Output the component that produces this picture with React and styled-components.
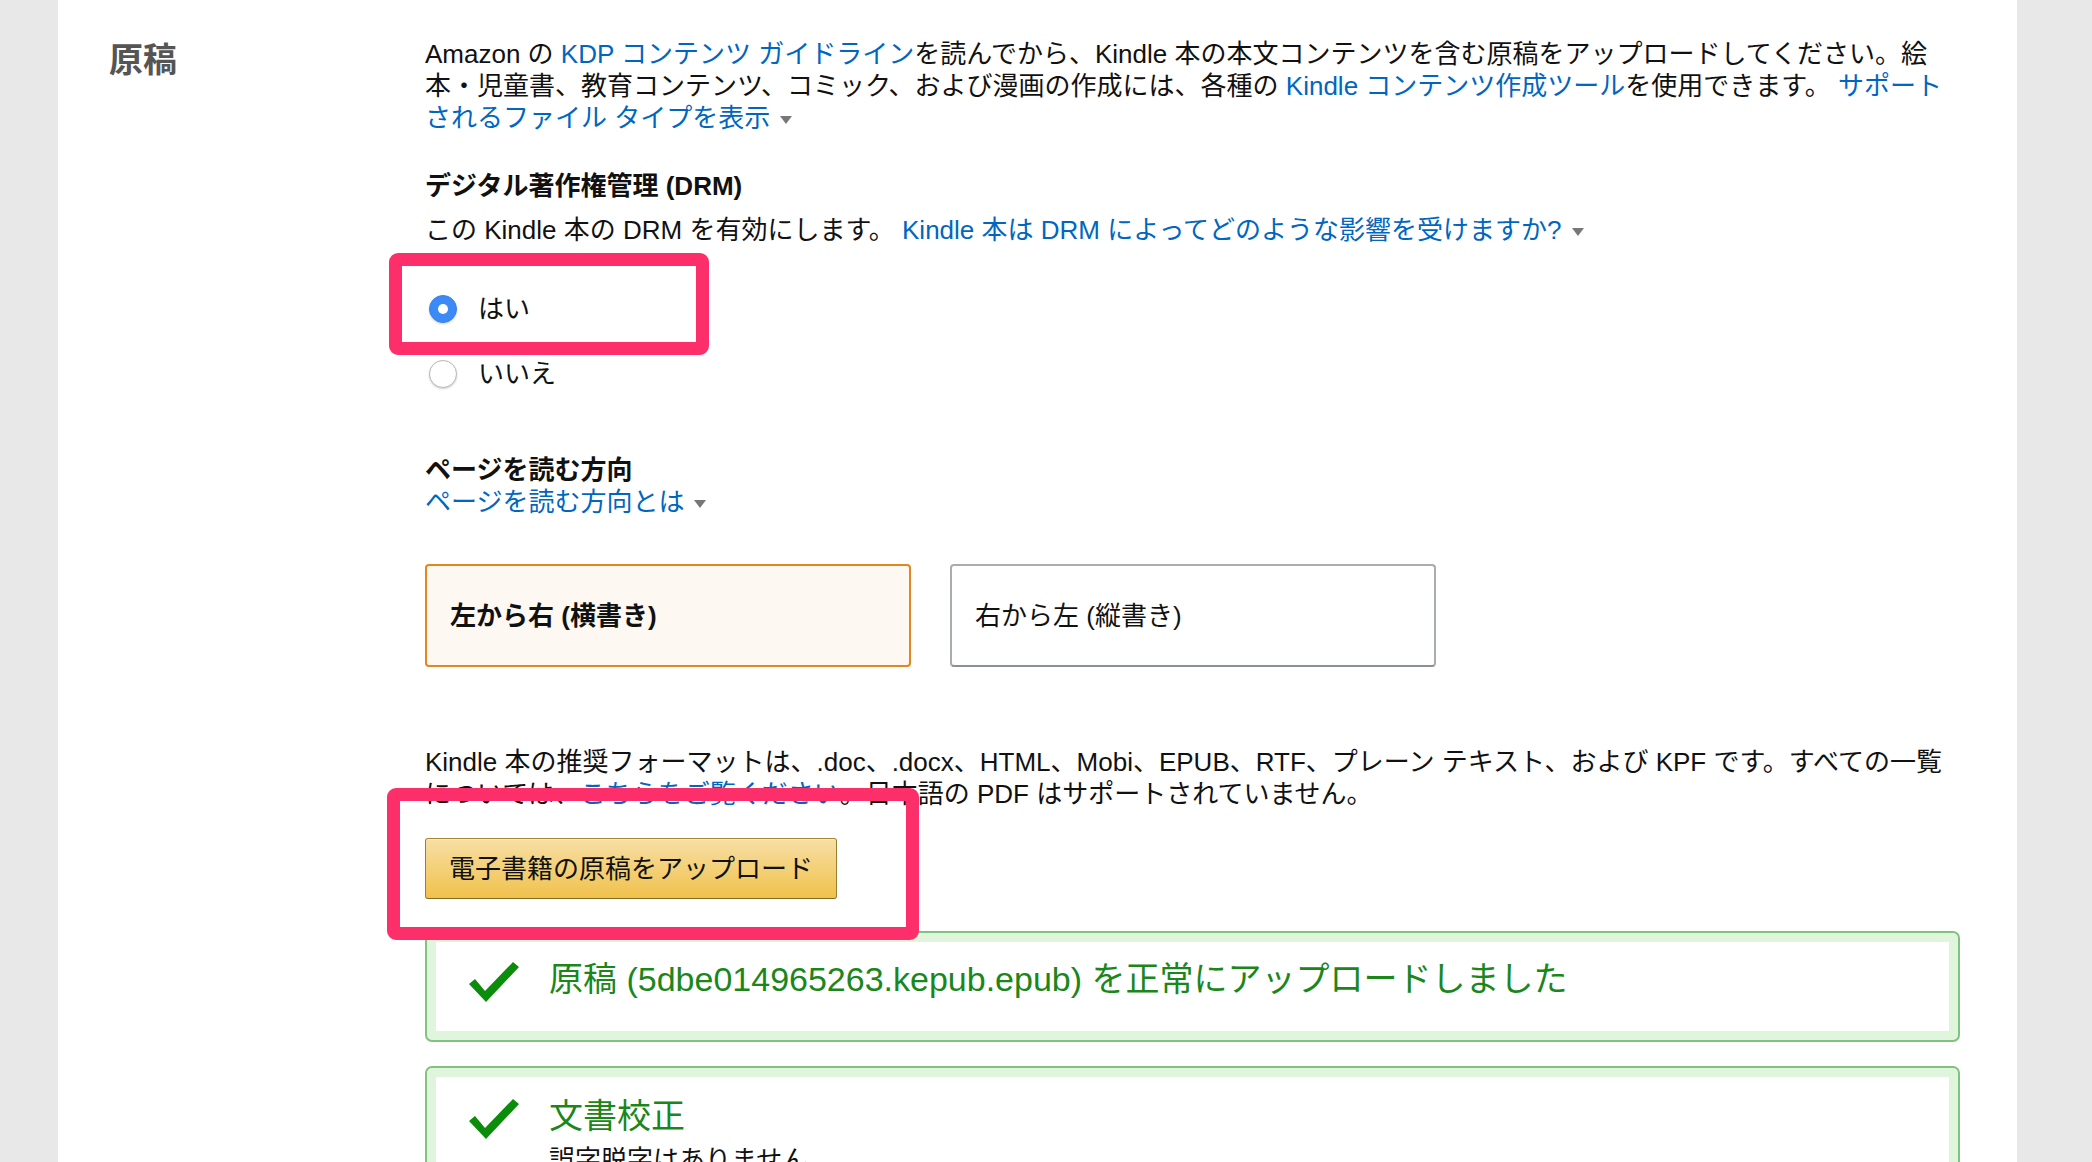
import styled, { createGlobalStyle } from "styled-components";

const GlobalStyle = createGlobalStyle`
  html, body {
    margin: 0;
    padding: 0;
    background: #e8e8e8;
  }
  body {
    font-family: "Liberation Sans", "Noto Sans CJK JP", sans-serif;
    color: #111;
  }
`;

const Page = styled.div`
  height: 1162px;
  overflow: hidden;
  padding-left: 58px;
`;

const Panel = styled.div`
  width: 1959px;
  min-height: 1162px;
  box-sizing: border-box;
  background: #fff;
  padding: 38px 0 0 51px;
  display: grid;
  grid-template-columns: 316px 1535px;
  align-items: start;
`;

const SideTitle = styled.h2`
  margin: 0;
  font-size: 34px;
  line-height: 44px;
  font-weight: 700;
  color: #555;
`;

const Main = styled.div`
  display: flex;
  flex-direction: column;
  font-size: 26px;
  line-height: 32px;
`;

const Text = styled.p`
  margin: ${(p) => p.$top || 0}px 0 0;
  white-space: nowrap;
`;

const Heading = styled.h3`
  margin: ${(p) => p.$top || 0}px 0 0;
  font-size: 26px;
  line-height: 32px;
  font-weight: 700;
`;

const Link = styled.a`
  color: #0066c0;
  text-decoration: none;
  cursor: pointer;
`;

const Caret = styled.span`
  display: inline-block;
  margin-left: 10px;
  vertical-align: middle;
  border-left: 6px solid transparent;
  border-right: 6px solid transparent;
  border-top: 8px solid #777;
`;

const RadioGroup = styled.div`
  margin-top: 30px;
  display: flex;
  flex-direction: column;
`;

const Mark = styled.div`
  position: relative;
`;

const Highlight = styled.div`
  position: absolute;
  top: ${(p) => p.$top}px;
  left: ${(p) => p.$left}px;
  width: ${(p) => p.$w}px;
  height: ${(p) => p.$h}px;
  box-sizing: border-box;
  border: 13px solid #fd2f6b;
  border-radius: 9px;
  pointer-events: none;
  z-index: 2;
`;

const RadioRow = styled.label`
  display: flex;
  align-items: center;
  gap: 21px;
  height: 65px;
  padding-left: 4px;
`;

const RadioDot = styled.span`
  width: 28px;
  height: 28px;
  border-radius: 50%;
  box-sizing: border-box;
  display: flex;
  align-items: center;
  justify-content: center;
  background: ${(p) => (p.$on ? "#3c8af6" : "#fff")};
  border: 1px solid ${(p) => (p.$on ? "#3482f2" : "#b9b9b9")};
  box-shadow: 0 1px 2px rgba(0, 0, 0, 0.18);

  &::after {
    content: "";
    display: ${(p) => (p.$on ? "block" : "none")};
    width: 10px;
    height: 10px;
    border-radius: 50%;
    background: #fff;
  }
`;

const Options = styled.div`
  margin-top: 46px;
  display: flex;
  gap: 39px;
`;

const Option = styled.button`
  width: 486px;
  height: 103px;
  box-sizing: border-box;
  padding: 0 0 0 23px;
  text-align: left;
  font: inherit;
  font-size: 26px;
  font-weight: ${(p) => (p.$active ? 700 : 400)};
  color: #111;
  border-radius: 4px;
  background: ${(p) => (p.$active ? "#fdf8f2" : "#fff")};
  border: 2px solid ${(p) => (p.$active ? "#e3861d" : "#a9acb1")};
  border-bottom-color: ${(p) => (p.$active ? "#e3861d" : "#8d9096")};
`;

const ButtonWrap = styled(Mark)`
  margin-top: 28px;
  align-self: flex-start;
`;

const UploadButton = styled.button`
  height: 61px;
  padding: 0 23px;
  font: inherit;
  font-size: 26px;
  color: #111;
  border: 1px solid;
  border-color: #a88734 #9c7e31 #846a29;
  border-radius: 3px;
  background: linear-gradient(to bottom, #f7dfa5, #f0c14b);
  box-shadow: inset 0 1px 0 rgba(255, 255, 255, 0.4);
`;

const Alert = styled.div`
  margin-top: ${(p) => p.$top}px;
  box-sizing: border-box;
  border: 2px solid #80c280;
  border-radius: 7px;
  box-shadow: inset 0 0 0 9px #dff6dd;
  padding: ${(p) => (p.$tall ? "28px 40px 40px 42px" : "26px 40px 38px 42px")};
  display: grid;
  grid-template-columns: 50px 1fr;
  column-gap: 30px;
  min-height: 108px;
`;

const Check = styled.svg`
  width: 50px;
  height: 40px;
  margin-top: 3px;
`;

const AlertTitle = styled.div`
  font-size: 34px;
  line-height: 40px;
  color: #1b871b;
`;

const AlertBody = styled.div`
  margin-top: 8px;
  font-size: 26px;
  line-height: 32px;
  color: #111;
`;

const CheckIcon = () => (
  <Check viewBox="0 0 50 40">
    <polygon points="0,22 6,17 16,29 44,0 50,5 17,40" fill="#0b8d0b" />
  </Check>
);

export default function App() {
  return (
    <>
      <GlobalStyle />
      <Page>
        <Panel>
          <SideTitle>原稿</SideTitle>
          <Main>
            <Text>
              Amazon の <Link>KDP コンテンツ ガイドライン</Link>を読んでから、Kindle 本の本文コンテンツを含む原稿をアップロードしてください。絵
              <br />
              本・児童書、教育コンテンツ、コミック、および漫画の作成には、各種の <Link>Kindle コンテンツ作成ツール</Link>を使用できます。 <Link>サポート</Link>
              <br />
              <Link>されるファイル タイプを表示</Link>
              <Caret />
            </Text>

            <Heading $top={36}>デジタル著作権管理 (DRM)</Heading>
            <Text $top={12}>
              この Kindle 本の DRM を有効にします。 <Link>Kindle 本は DRM によってどのような影響を受けますか?</Link>
              <Caret />
            </Text>

            <RadioGroup>
              <Mark>
                <Highlight $top={-23} $left={-36} $w={320} $h={102} />
                <RadioRow>
                  <RadioDot $on />
                  はい
                </RadioRow>
              </Mark>
              <RadioRow>
                <RadioDot />
                いいえ
              </RadioRow>
            </RadioGroup>

            <Heading $top={48}>ページを読む方向</Heading>
            <Text>
              <Link>ページを読む方向とは</Link>
              <Caret />
            </Text>

            <Options>
              <Option $active>左から右 (横書き)</Option>
              <Option>右から左 (縦書き)</Option>
            </Options>

            <Text $top={79}>
              Kindle 本の推奨フォーマットは、.doc、.docx、HTML、Mobi、EPUB、RTF、プレーン テキスト、および KPF です。すべての一覧
              <br />
              については、<Link>こちらをご覧ください</Link>。日本語の PDF はサポートされていません。
            </Text>

            <ButtonWrap>
              <Highlight $top={-50} $left={-38} $w={532} $h={152} />
              <UploadButton>電子書籍の原稿をアップロード</UploadButton>
            </ButtonWrap>

            <Alert $top={32}>
              <CheckIcon />
              <AlertTitle>原稿 (5dbe014965263.kepub.epub) を正常にアップロードしました</AlertTitle>
            </Alert>

            <Alert $top={24} $tall>
              <CheckIcon />
              <div>
                <AlertTitle>文書校正</AlertTitle>
                <AlertBody>誤字脱字はありません。</AlertBody>
              </div>
            </Alert>
          </Main>
        </Panel>
      </Page>
    </>
  );
}
